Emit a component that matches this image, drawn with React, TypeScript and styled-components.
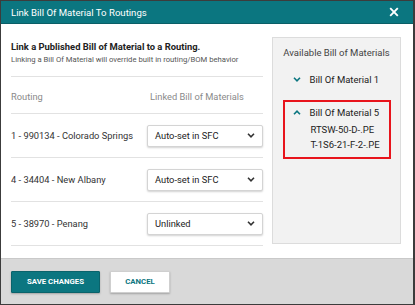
import React from "react"
import styled, { createGlobalStyle } from "styled-components"

const GlobalStyle = createGlobalStyle`
  html, body {
    margin: 0;
    padding: 0;
    background: #ffffff;
  }
  body {
    font-family: Roboto, "Liberation Sans", Arial, sans-serif;
  }
  * {
    box-sizing: border-box;
  }
`

const teal = "#0b7680"

const Dialog = styled.div`
  width: 415px;
  height: 305px;
  display: flex;
  flex-direction: column;
  border: 1px solid #3c3c3c;
  border-right-width: 2px;
  background: #fff;
  overflow: hidden;
`

const Header = styled.div`
  height: 23px;
  flex: none;
  display: flex;
  align-items: center;
  justify-content: space-between;
  padding: 0 14px 0 10px;
  background: ${teal};
  color: #fff;
  font-size: 9.6px;
  border-bottom: 1px solid #0a5e66;
`

const Close = styled.button`
  border: none;
  background: none;
  padding: 0;
  display: flex;
  color: #fff;
  cursor: pointer;
`

const Body = styled.div`
  flex: 1;
  display: flex;
  gap: 9px;
  padding: 14px 0 0 10px;
`

const Left = styled.div`
  width: 252px;
  display: flex;
  flex-direction: column;
`

const Heading = styled.div`
  font-size: 9.4px;
  font-weight: 700;
  color: #222;
  line-height: 12px;
  margin-top: 3px;
`

const Sub = styled.div`
  font-size: 7.7px;
  color: #555;
  line-height: 10px;
  margin-top: 2px;
  padding-bottom: 11px;
  border-bottom: 1px solid #e2e2e2;
`

const Row = styled.div<{ $head?: boolean }>`
  display: grid;
  grid-template-columns: 136px 1fr;
  align-items: center;
  height: ${(p) => (p.$head ? "37px" : "44px")};
  border-bottom: 1px solid #e2e2e2;
  font-size: 9.3px;
  color: ${(p) => (p.$head ? "#8a8a8a" : "#333")};
  padding-top: ${(p) => (p.$head ? "2px" : "0")};
`

const ColHead = styled.span`
  padding-left: 3px;
`

const Select = styled.div`
  height: 22px;
  display: flex;
  align-items: center;
  justify-content: space-between;
  padding: 0 7px 0 7px;
  border: 1px solid #d4d4d4;
  border-radius: 2px;
  box-shadow: 0 1px 2px rgba(0, 0, 0, 0.18);
  font-size: 9.3px;
  color: #222;
  background: #fff;
`

const Panel = styled.div`
  width: 129px;
  height: 207px;
  margin-top: -1px;
  background: #f2f2f2;
  border: 1px solid #dcdcdc;
  padding-top: 9px;
  display: flex;
  flex-direction: column;
  align-items: center;
`

const PanelTitle = styled.div`
  font-size: 9.5px;
  color: #444;
  margin-bottom: 9px;
`

const Group = styled.div<{ $active?: boolean }>`
  width: 108px;
  border: 2px solid ${(p) => (p.$active ? "#e8141c" : "transparent")};
  padding: 3px 0 5px 8px;
  margin-bottom: 7px;
`

const GroupHead = styled.div`
  display: flex;
  align-items: center;
  gap: 9px;
  font-size: 9.5px;
  color: #222;
  height: 14px;
`

const Item = styled.div<{ $first?: boolean }>`
  font-size: 9.5px;
  color: #222;
  padding-left: 18px;
  line-height: 15px;
  margin-top: ${(p) => (p.$first ? "3px" : "0")};
`

const Footer = styled.div`
  height: 46px;
  flex: none;
  background: #d9d9d9;
  border-top: 1px solid #c9c9c9;
  display: flex;
  align-items: center;
  gap: 10px;
  padding: 0 0 0 10px;
  margin-top: 12px;
`

const Button = styled.button<{ $primary?: boolean }>`
  height: 22px;
  width: ${(p) => (p.$primary ? "89px" : "60px")};
  padding: 0;
  border: 1px solid ${(p) => (p.$primary ? "#0a636b" : "#cfcfcf")};
  border-radius: 1px;
  background: ${(p) => (p.$primary ? teal : "#fff")};
  color: ${(p) => (p.$primary ? "#fff" : teal)};
  font-family: Roboto, "Liberation Sans", Arial, sans-serif;
  font-size: 7.8px;
  font-weight: 700;
  box-shadow: 0 1px 2px rgba(0, 0, 0, 0.25);
  cursor: pointer;
`

const Chevron = ({ up, color = "#333" }: { up?: boolean; color?: string }) => (
  <svg width="8" height="5" viewBox="0 0 8 5">
    <path
      d={up ? "M1 4.3 L4 1.2 L7 4.3" : "M1 0.8 L4 3.8 L7 0.8"}
      fill="none"
      stroke={color}
      strokeWidth="1.6"
    />
  </svg>
)

const rows = [
  { name: "1 - 990134 - Colorado Springs", value: "Auto-set in SFC" },
  { name: "4 - 34404 - New Albany", value: "Auto-set in SFC" },
  { name: "5 - 38970 - Penang", value: "Unlinked" },
]

export default function App() {
  return (
    <>
      <GlobalStyle />
      <Dialog>
        <Header>
          <span>Link Bill Of Material To Routings</span>
          <Close aria-label="Close">
            <svg width="10" height="10" viewBox="0 0 10 10">
              <path d="M1.2 1.2 L8.8 8.8 M8.8 1.2 L1.2 8.8" stroke="#fff" strokeWidth="1.9" />
            </svg>
          </Close>
        </Header>
        <Body>
          <Left>
            <Heading>Link a Published Bill of Material to a Routing.</Heading>
            <Sub>Linking a Bill Of Material will override built in routing/BOM behavior</Sub>
            <Row $head>
              <span>Routing</span>
              <ColHead>Linked Bill of Materials</ColHead>
            </Row>
            {rows.map((r) => (
              <Row key={r.name}>
                <span>{r.name}</span>
                <Select>
                  <span>{r.value}</span>
                  <Chevron />
                </Select>
              </Row>
            ))}
          </Left>
          <Panel>
            <PanelTitle>Available Bill of Materials</PanelTitle>
            <Group>
              <GroupHead>
                <Chevron color={teal} />
                <span>Bill Of Material 1</span>
              </GroupHead>
            </Group>
            <Group $active>
              <GroupHead>
                <Chevron up color={teal} />
                <span>Bill Of Material 5</span>
              </GroupHead>
              <Item $first>RTSW-50-D-.PE</Item>
              <Item>T-1S6-21-F-2-.PE</Item>
            </Group>
          </Panel>
        </Body>
        <Footer>
          <Button $primary>SAVE CHANGES</Button>
          <Button>CANCEL</Button>
        </Footer>
      </Dialog>
    </>
  )
}
